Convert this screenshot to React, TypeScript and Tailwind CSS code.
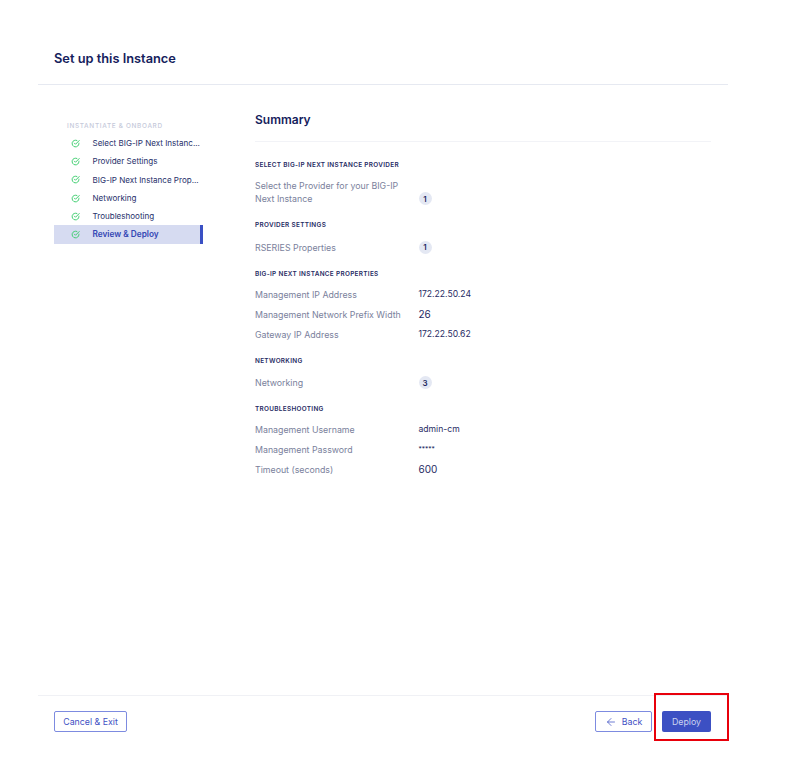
import type { ReactNode } from 'react';
import { ArrowLeft } from 'lucide-react';

const steps = [
  'Select BIG-IP Next Instanc...',
  'Provider Settings',
  'BIG-IP Next Instance Prop...',
  'Networking',
  'Troubleshooting',
  'Review & Deploy',
];

function CheckIcon() {
  return (
    <svg width="9" height="9" viewBox="0 0 24 24" fill="none" stroke="#3fce6f" strokeWidth="2.6" strokeLinecap="round" strokeLinejoin="round" className="shrink-0">
      <path d="M21 11v1a9 9 0 1 1-5.3-8.2" />
      <path d="M22 4 12 14l-3-3" />
    </svg>
  );
}

function Badge({ n }: { n: number }) {
  return (
    <span className="flex h-[13px] w-[13px] items-center justify-center rounded-full bg-[#e4e8f3] text-[8px] font-semibold text-[#1f2a63]">
      {n}
    </span>
  );
}

function Section({ title, first, tight, children }: { title: string; first?: boolean; tight?: boolean; children: ReactNode }) {
  return (
    <div className={first ? 'mt-[18px]' : 'mt-[15.2px]'}>
      <div className="text-[6.4px] leading-[10px] font-semibold tracking-[0.32px] text-[#1f2a63] uppercase">{title}</div>
      <div className={`flex flex-col gap-[7px] ${tight ? 'mt-[8.8px]' : first ? 'mt-[9.3px]' : 'mt-[10.3px]'}`}>{children}</div>
    </div>
  );
}

function Row({ label, children }: { label: string; children: ReactNode }) {
  return (
    <div className="flex items-end">
      <div className="w-[163.5px] shrink-0 text-[8.8px] leading-[13px] text-[#7a819c]">{label}</div>
      <div className="flex h-[13px] items-center text-[8.6px] text-[#1f2a63]">{children}</div>
    </div>
  );
}

export default function App() {
  return (
    <div className="relative h-[778px] w-[803px] overflow-hidden bg-white font-['Inter',sans-serif]">
      <div className="ml-[38px] flex h-full w-[690px] flex-col">
        <div className="flex h-[85px] items-center border-b border-[#e6e9f1] pt-[34px] pl-4 text-[12.8px] font-semibold text-[#15215c]">
          Set up this Instance
        </div>

        <div className="flex h-[610px]">
          <div className="w-[217px] pt-[34px] pl-4">
            <div className="w-[149px]">
              <div className="pt-[1.5px] pb-[3.5px] pl-[13px] text-[6.4px] leading-[10px] font-medium tracking-[0.7px] text-[#c5c9da]">
                INSTANTIATE &amp; ONBOARD
              </div>
              {steps.map((s, i) => {
                const active = i === steps.length - 1;
                return (
                  <div
                    key={s}
                    className={`flex h-[18.3px] items-center pl-[17px] ${active ? 'border-r-[3px] border-[#3a50c4] bg-[#d6dbf1] text-[8.25px] font-semibold text-[#3346b4]' : 'text-[8.05px] text-[#27316b]'}`}
                  >
                    <CheckIcon />
                    <span className="ml-[12.5px] whitespace-nowrap">{s}</span>
                  </div>
                );
              })}
            </div>
          </div>

          <div className="w-[456px] pt-[27px]">
            <div className="border-b border-[#f2f3f7] pb-[14px] text-[12px] leading-[15px] font-semibold text-[#15215c]">Summary</div>

            <Section first title="Select BIG-IP Next Instance Provider">
              <Row label="Select the Provider for your BIG-IP Next Instance">
                <Badge n={1} />
              </Row>
            </Section>

            <Section title="Provider Settings">
              <Row label="RSERIES Properties">
                <Badge n={1} />
              </Row>
            </Section>

            <Section tight title="BIG-IP Next Instance Properties">
              <Row label="Management IP Address">172.22.50.24</Row>
              <Row label="Management Network Prefix Width">
                <span className="text-[10px]">26</span>
              </Row>
              <Row label="Gateway IP Address">172.22.50.62</Row>
            </Section>

            <Section title="Networking">
              <Row label="Networking">
                <Badge n={3} />
              </Row>
            </Section>

            <Section tight title="Troubleshooting">
              <Row label="Management Username">admin-cm</Row>
              <Row label="Management Password">
                <span className="text-[6.5px]">*****</span>
              </Row>
              <Row label="Timeout (seconds)">
                <span className="text-[10px]">600</span>
              </Row>
            </Section>
          </div>
        </div>

        <div className="flex items-start justify-between border-t border-[#f0f1f5] pt-[15px] pr-[17px] pl-4">
          <button className="h-[21px] w-[73px] rounded-[2px] border border-[#7d8be0] bg-white text-[8.8px] text-[#3f51c4]">Cancel &amp; Exit</button>
          <div className="flex gap-[10px]">
            <button className="flex h-[21px] w-[57px] items-center justify-center gap-[5px] rounded-[2px] border border-[#7d8be0] bg-white text-[8.8px] text-[#3f51c4]">
              <ArrowLeft size={12} strokeWidth={1.5} />
              Back
            </button>
            <button className="h-[21px] w-[49px] rounded-[2px] bg-[#3c50c3] text-[8.8px] text-[#ccd3f0]">Deploy</button>
          </div>
        </div>
      </div>

      <div className="absolute top-[693px] left-[654px] h-[48px] w-[75px] border-2 border-[#e8000b]" />
    </div>
  );
}
